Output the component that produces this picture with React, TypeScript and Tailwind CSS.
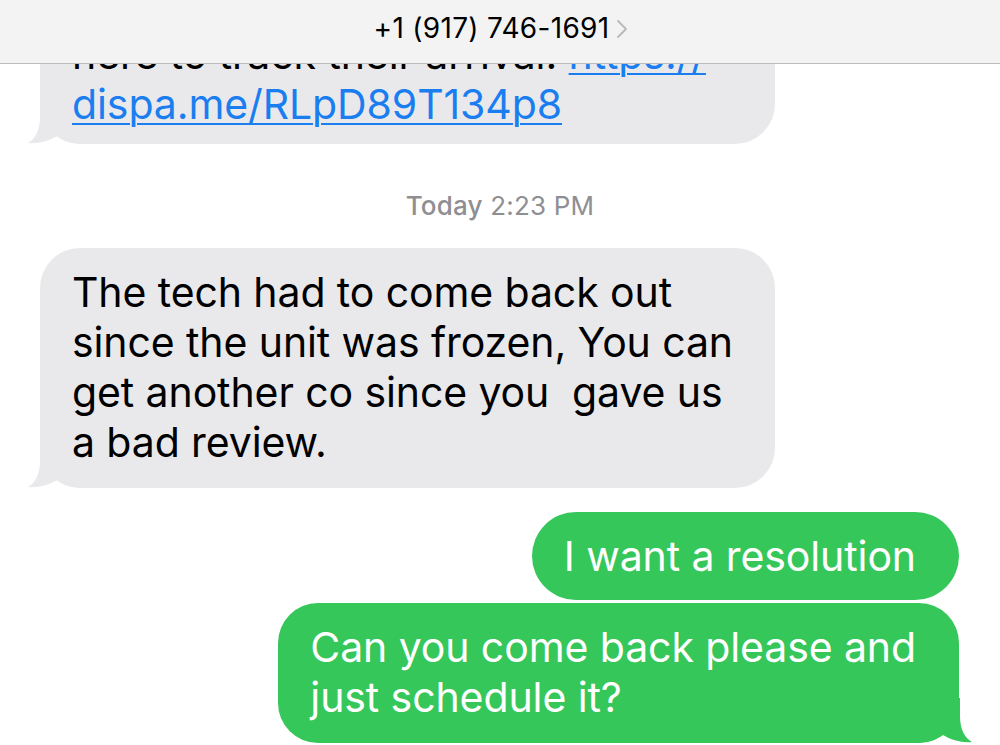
import React from "react";

const font = { fontFamily: "Inter, 'Noto Sans', sans-serif" };

function LeftTail({ color }: { color: string }) {
  return (
    <svg
      className="absolute left-[-12px] bottom-0"
      width="60"
      height="45"
      viewBox="0 0 60 45"
    >
      <path
        d="M12,0 L12,18 C12,32 7,40 0,44 C10,45 21,42 29,37 C36,42 45,45 60,45 L60,0 Z"
        fill={color}
      />
    </svg>
  );
}

function RightTail({ color }: { color: string }) {
  return (
    <svg
      className="absolute right-[-13px] bottom-0"
      width="60"
      height="45"
      viewBox="0 0 60 45"
    >
      <path
        d="M48,0 L48,18 C48,32 53,40 60,44 C50,45 39,42 31,37 C24,42 15,45 0,45 L0,0 Z"
        fill={color}
      />
    </svg>
  );
}

const bubbleText = "relative text-[41px] leading-[50px] tracking-[-0.1px]";
const link =
  "text-[#1b7ef0] underline decoration-[2px] underline-offset-[4px]";

export default function App() {
  return (
    <div
      className="relative w-[1000px] h-[745px] overflow-hidden bg-white"
      style={font}
    >
      {/* conversation */}
      <div className="flex flex-col">
        {/* bubble 1 (partially hidden under header) */}
        <div className="pl-[40px]">
          <div className="relative w-[735px] bg-[#e9e9eb] rounded-b-[40px] pt-[29px] pb-[15px] pl-[32px] pr-[42px] text-black">
            <LeftTail color="#e9e9eb" />
            <div className={bubbleText}>
              <div className="whitespace-nowrap">
                here to track their arrival: <span className={link}>https://</span>
              </div>
              <div className="whitespace-nowrap">
                <span className={link}>dispa.me/RLpD89T134p8</span>
              </div>
            </div>
          </div>
        </div>

        {/* timestamp */}
        <div className="mt-[47px] text-center text-[26px] leading-[30px] text-[#8e8e93] tracking-[0.2px]">
          <span className="font-medium">Today</span> <span>2:23 PM</span>
        </div>

        {/* bubble 2 */}
        <div className="mt-[27px] pl-[40px] flex">
          <div className="relative bg-[#e9e9eb] rounded-[40px] pt-[19px] pb-[21px] pl-[32px] pr-[42px] text-black">
            <LeftTail color="#e9e9eb" />
            <div className={bubbleText}>
              <div className="whitespace-nowrap">The tech had to come back out</div>
              <div className="whitespace-nowrap">since the unit was frozen, You can</div>
              <div className="whitespace-pre">get another co since you  gave us</div>
              <div className="whitespace-nowrap">a bad review.</div>
            </div>
          </div>
        </div>

        {/* sent 1 */}
        <div className="mt-[24px] pr-[41px] flex justify-end">
          <div className="relative bg-[#36c75a] rounded-[44px] pt-[19px] pb-[19px] pl-[32px] pr-[43px] text-white">
            <div className={bubbleText}>
              <div className="whitespace-nowrap">I want a resolution</div>
            </div>
          </div>
        </div>

        {/* sent 2 */}
        <div className="mt-[3px] pr-[41px] flex justify-end">
          <div className="relative bg-[#36c75a] rounded-[40px] pt-[19px] pb-[21px] pl-[32px] pr-[43px] text-white">
            <RightTail color="#36c75a" />
            <div className={bubbleText}>
              <div className="whitespace-nowrap">Can you come back please and</div>
              <div className="whitespace-nowrap">just schedule it?</div>
            </div>
          </div>
        </div>
      </div>

      {/* header overlay */}
      <div className="absolute z-10 top-0 left-0 right-0 h-[64px] bg-[#f3f3f4] border-b border-[#bdbdc0] flex items-center justify-center">
        <div className="flex items-center gap-[7px] pl-[2px] mt-[-8px]">
          <span className="text-[28px] leading-[32px] text-black tracking-[0.3px]">
            +1 (917) 746-1691
          </span>
          <svg width="12" height="20" viewBox="0 0 12 20" className="mt-[2px]">
            <polyline
              points="2,2 10,10 2,18"
              fill="none"
              stroke="#b9b9bd"
              strokeWidth="1.8"
              strokeLinecap="round"
              strokeLinejoin="round"
            />
          </svg>
        </div>
      </div>
    </div>
  );
}
